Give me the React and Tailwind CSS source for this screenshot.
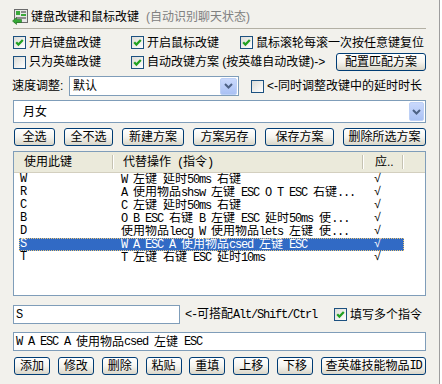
const mono = "font-['Liberation_Mono','Noto_Sans_CJK_SC',monospace] tracking-[-1.2px]";

// SimSun-like look: CJK at 12px, latin half-width in a serif mono
const Mix = ({ text }) =>
  text.split(/([\u3000-\u9fff\uff00-\uffef]+)/).map((part, i) =>
    /[\u3000-\u9fff\uff00-\uffef]/.test(part) ? (
      <span key={i}>{part}</span>
    ) : (
      <span key={i} className={mono}>{part}</span>
    )
  );

const Check = ({ checked }) => (
  <span className="w-[13px] h-[13px] shrink-0 border border-[#1c5180] bg-linear-to-br from-[#dcdcd7] to-white flex items-center justify-center">
    {checked && (
      <svg width="11" height="11" viewBox="0 0 11 11">
        <path d="M2.2 5.2 L4.4 7.6 L8.8 2.9" stroke="#21a121" strokeWidth="2.2" fill="none" />
      </svg>
    )}
  </span>
);

const CheckLabel = ({ checked, children, className = '' }) => (
  <label className={`flex items-center gap-[3px] whitespace-nowrap ${className}`}>
    <Check checked={checked} />
    <span>{children}</span>
  </label>
);

const Btn = ({ w, children }) => (
  <button className={`${w} h-[18px] shrink-0 rounded-[3px] border border-[#003c74] bg-linear-to-b from-white via-[#f5f4ef] to-[#d9d6c9] flex items-center justify-center whitespace-nowrap text-[12px] leading-none`}>
    {children}
  </button>
);

const Arrow = ({ size }) => (
  <span className={`${size} shrink-0 rounded-[2px] border border-[#bdd0f6] bg-linear-to-b from-[#cad9fc] to-[#aac1f4] flex items-center justify-center`}>
    <svg width="9" height="6" viewBox="0 0 9 6">
      <path d="M1 1 L4.5 4.5 L8 1" stroke="#4d6185" strokeWidth="2" fill="none" />
    </svg>
  </span>
);

const AppIcon = () => (
  <svg width="16" height="16" viewBox="0 0 16 16" className="shrink-0">
    <rect x="2.5" y="0.5" width="13" height="13" fill="#e6e6e6" stroke="#6b6b6b" />
    <rect x="4" y="2" width="4" height="4" fill="#3aa83a" />
    <rect x="9" y="2" width="5" height="2" fill="#8c8c8c" />
    <rect x="9" y="5" width="5" height="2" fill="#3aa83a" />
    <rect x="4" y="8" width="10" height="2" fill="#8c8c8c" />
    <path d="M0.5 12 L4.5 8.5 V10.5 H9.5 V13.5 H4.5 V15.5 Z" fill="#35a835" stroke="#1f6f1f" strokeWidth="0.6" />
  </svg>
);

const rows = [
  ['W', 'W 左键 延时50ms 右键'],
  ['R', 'A 使用物品shsw 左键 ESC O T ESC 右键...'],
  ['C', 'C 左键 延时50ms 右键'],
  ['B', 'O B ESC 右键 B 左键 ESC 延时50ms 使...'],
  ['D', '使用物品lecg W 使用物品lets 左键 使...'],
  ['S', 'W A ESC A 使用物品csed 左键 ESC'],
  ['T', 'T 左键 右键 ESC 延时10ms'],
];

const HeadCell = ({ w, pl, children }) => (
  <div className={`${w} h-full flex items-center`}>
    <span className={`flex-1 ${pl} whitespace-nowrap`}>{children}</span>
    <span className="w-[2px] h-[14px] border-l border-r border-l-[#c5c2b2] border-r-white" />
  </div>
);

export default function App() {
  return (
    <div className="w-[442px] h-[384px] bg-white flex font-['Liberation_Sans','Noto_Sans_CJK_SC',sans-serif] text-[12px] leading-[14px] text-black">
      <div className="w-[440px] h-full bg-[#f2f1ec] border-r border-[#9d9d9d] px-[13px] pt-[8px] flex flex-col">
        {/* title */}
        <div className="h-[17px] flex items-center -ml-[1px]">
          <AppIcon />
          <span className="ml-[3px]">键盘改键和鼠标改键</span>
          <span className="ml-[7px] text-[#808080]">(自动识别聊天状态)</span>
        </div>
        <div className="mt-[3px] h-px bg-[#b3b0a4]" />

        {/* options */}
        <div className="mt-[7px] h-[13px] flex items-center">
          <CheckLabel checked className="w-[118px]">开启键盘改键</CheckLabel>
          <CheckLabel checked className="w-[109px]">开启鼠标改键</CheckLabel>
          <CheckLabel checked>鼠标滚轮每滚一次按任意键复位</CheckLabel>
        </div>
        <div className="mt-[4px] h-[18px] flex items-center">
          <CheckLabel className="w-[118px]">只为英雄改键</CheckLabel>
          <CheckLabel checked>自动改键方案 (按英雄自动改键)-&gt;</CheckLabel>
          <div className="ml-auto">
            <Btn w="w-[90px]">配置匹配方案</Btn>
          </div>
        </div>
        <div className="mt-[5px] h-[20px] flex items-center">
          <span className="-ml-[1px] w-[57px]">速度调整:</span>
          <div className="w-[170px] h-full border border-[#7f9db9] bg-white flex items-center">
            <span className="flex-1 pl-[3px]">默认</span>
            <div className="mr-[1px]">
              <Arrow size="w-[17px] h-[17px]" />
            </div>
          </div>
          <CheckLabel className="ml-[12px]">&lt;-同时调整改键中的延时时长</CheckLabel>
        </div>
        <div className="mt-[4px] h-[23px] border border-[#7f9db9] bg-white flex items-center">
          <span className="flex-1 pl-[9px]">月女</span>
          <div className="mr-[1px]">
            <Arrow size="w-[15px] h-[19px]" />
          </div>
        </div>

        {/* scheme buttons */}
        <div className="mt-[5px] h-[18px] pl-px flex items-center justify-between">
          <Btn w="w-[41px]">全选</Btn>
          <Btn w="w-[49px]">全不选</Btn>
          <Btn w="w-[62px]">新建方案</Btn>
          <Btn w="w-[63px]">方案另存</Btn>
          <Btn w="w-[69px]">保存方案</Btn>
          <Btn w="w-[83px]">删除所选方案</Btn>
        </div>

        {/* key list */}
        <div className="mt-[5px] h-[145px] border border-[#7f9db9] bg-white flex flex-col overflow-hidden">
          <div className="h-[21px] shrink-0 bg-[#ebeadb] border-b border-[#d3cfbf] flex">
            <HeadCell w="w-[100px]" pl="pl-[10px]">使用此键</HeadCell>
            <HeadCell w="w-[250px]" pl="pl-[9px]"><Mix text="代替操作 (指令)" /></HeadCell>
            <HeadCell w="w-[40px]" pl="pl-[11px]">应..</HeadCell>
          </div>
          <div className="pl-[5px] flex flex-col">
            {rows.map(([key, cmd]) => {
              const sel = key === 'S';
              return (
                <div
                  key={key}
                  className={`w-[385px] h-[13px] leading-[13px] flex whitespace-pre ${
                    sel ? 'bg-[#316ac5] text-white outline-1 outline-dotted outline-[#e8c778] -outline-offset-1' : ''
                  }`}
                >
                  <span className={`w-[95px] pl-[1px] ${mono}`}>{key}</span>
                  <span className="w-[250px] pl-[7px] overflow-hidden"><Mix text={cmd} /></span>
                  <span className={`w-[40px] pl-[10px] ${mono}`}>√</span>
                </div>
              );
            })}
          </div>
        </div>

        {/* edit fields */}
        <div className="mt-[9px] h-[19px] flex items-center">
          <div className="w-[167px] h-full border border-[#7f9db9] bg-white flex items-center pl-[2px] whitespace-pre">
            <span className={mono}>S</span>
          </div>
          <span className="ml-[5px] whitespace-pre"><Mix text="<-可搭配Alt/Shift/Ctrl" /></span>
          <CheckLabel checked className="ml-[17px]">填写多个指令</CheckLabel>
        </div>
        <div className="mt-[8px] h-[19px] border border-[#7f9db9] bg-white flex items-center pl-[2px] whitespace-pre">
          <Mix text="W A ESC A 使用物品csed 左键 ESC" />
        </div>

        <div className="mt-[6px] h-[18px] pl-px flex items-center justify-between">
          <Btn w="w-[36px]">添加</Btn>
          <Btn w="w-[36px]">修改</Btn>
          <Btn w="w-[36px]">删除</Btn>
          <Btn w="w-[36px]">粘贴</Btn>
          <Btn w="w-[36px]">重填</Btn>
          <Btn w="w-[36px]">上移</Btn>
          <Btn w="w-[36px]">下移</Btn>
          <Btn w="w-[105px]"><Mix text="查英雄技能物品ID" /></Btn>
        </div>
      </div>
    </div>
  );
}
